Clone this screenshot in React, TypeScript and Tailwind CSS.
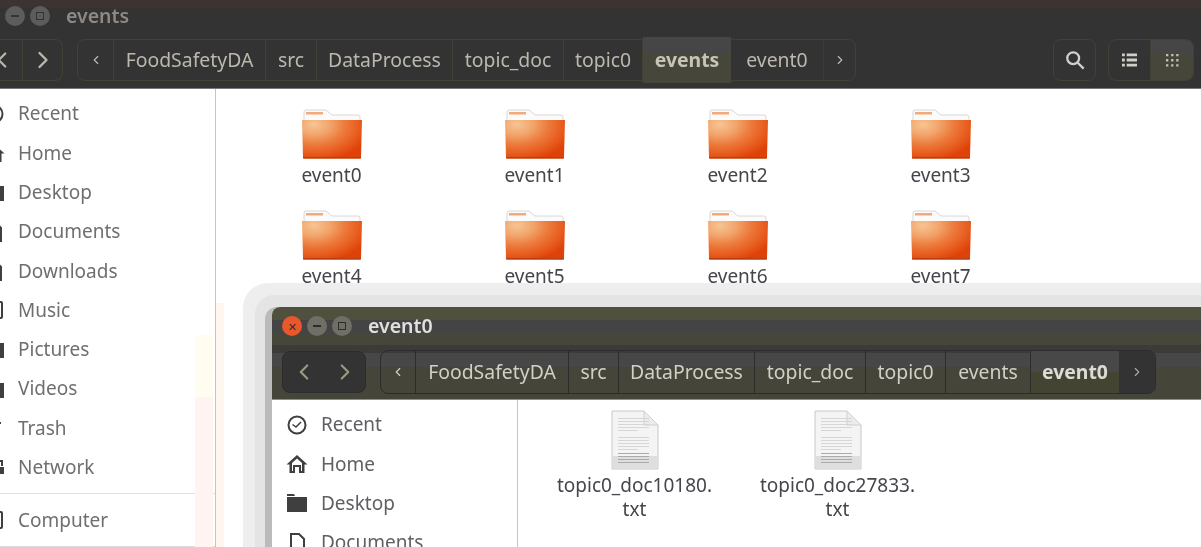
import { ChevronLeft, ChevronRight } from "lucide-react";

const font = "font-['Noto_Sans',sans-serif]";

const backPath = [
  { label: "FoodSafetyDA", w: "w-[152px]" },
  { label: "src", w: "w-[51px]" },
  { label: "DataProcess", w: "w-[136px]" },
  { label: "topic_doc", w: "w-[111px]" },
  { label: "topic0", w: "w-[79px]" },
];

const frontPath = [
  { label: "FoodSafetyDA", w: "w-[153px]" },
  { label: "src", w: "w-[50px]" },
  { label: "DataProcess", w: "w-[136px]" },
  { label: "topic_doc", w: "w-[111px]" },
  { label: "topic0", w: "w-[80px]" },
  { label: "events", w: "w-[85px]" },
];

const sideItems = ["Recent", "Home", "Desktop", "Documents", "Downloads", "Music", "Pictures", "Videos", "Trash", "Network"];
const events = ["event0", "event1", "event2", "event3", "event4", "event5", "event6", "event7"];

const FolderIcon = ({ id }: { id: string }) => (
  <svg width="62" height="50" viewBox="0 0 62 50">
    <defs>
      <radialGradient id={id} cx="0.2" cy="0.12" r="0.95">
        <stop offset="0" stopColor="#f7c592" />
        <stop offset="0.28" stopColor="#f2a56c" />
        <stop offset="0.55" stopColor="#ec7a3c" />
        <stop offset="0.8" stopColor="#e75c1e" />
        <stop offset="1" stopColor="#df4209" />
      </radialGradient>
    </defs>
    <path d="M3 20V3a2 2 0 0 1 2-2h20l6 5h26a2 2 0 0 1 2 2v12z" fill="#fbfbfb" stroke="#d8d8d8" />
    <rect x="5" y="3" width="17" height="2.5" fill="#f5a878" />
    <path d="M1 11h60l-1 37a1.500 1.500 0 0 1-1.500 1.500H3.500A1.500 1.500 0 0 1 2 48z" fill={`url(#${id})`} />
    <rect x="2" y="48" width="58" height="1.500" fill="#b8400f" />
  </svg>
);

const TextFileIcon = () => (
  <svg width="48" height="60" viewBox="0 0 48 60">
    <path d="M1 1h32l14 14v44H1z" fill="#f4f4f4" stroke="#c8c8c8" />
    <path d="M33 1v14h14z" fill="#ececec" stroke="#d0d0d0" />
    <rect x="1.500" y="46" width="45" height="12.500" fill="#dedede" />
    {[8, 11, 14, 17, 20, 27, 30, 33, 36, 39, 43, 46, 49, 52].map((y, i) => (
      <rect key={y} x="7" y={y} width={i % 5 === 4 ? 20 : 31} height="1" fill={y >= 43 ? "#ababab" : "#d6d6d6"} />
    ))}
  </svg>
);

const SideIcon = ({ name }: { name: string }) => {
  if (name === "Recent")
    return (
      <svg width="20" height="20" viewBox="0 0 20 20" fill="none" stroke="currentColor" strokeWidth="2">
        <circle cx="10" cy="10" r="8.5" />
        <path d="M5.5 9.500l3.500 2.500 5-5" strokeWidth="1.500" />
      </svg>
    );
  if (name === "Home")
    return (
      <svg width="22" height="20" viewBox="0 0 22 20" fill="currentColor">
        <path d="M11 1L0.5 10.500h3V19h5.500v-6h4v6h5.500v-8.500h3zM6 17v-8l5-4.500 5 4.500v8h-1v-6H7v6z" fillRule="evenodd" />
      </svg>
    );
  if (name === "Desktop" || name === "Pictures" || name === "Videos")
    return (
      <svg width="22" height="20" viewBox="0 0 22 20" fill="currentColor">
        <path d="M1 1h7l1 2H1zM1 4h20v15H1z" />
      </svg>
    );
  if (name === "Computer" || name === "Music")
    return (
      <svg width="20" height="20" viewBox="0 0 20 20" fill="none" stroke="currentColor" strokeWidth="2">
        <rect x="2" y="2" width="16" height="16" rx="1" />
      </svg>
    );
  if (name === "Trash")
    return (
      <svg width="18" height="20" viewBox="0 0 18 20" fill="none" stroke="currentColor" strokeWidth="2">
        <path d="M2 5h14M4 5l1 14h8l1-14M7 5V2h4v3" />
      </svg>
    );
  if (name === "Network")
    return (
      <svg width="22" height="20" viewBox="0 0 22 20" fill="currentColor">
        <path d="M1 2h9v7H1zM12 10h9v7h-9zM15 3h5v6h-2V5h-3z" />
      </svg>
    );
  return (
    <svg width="18" height="20" viewBox="0 0 18 20" fill="none" stroke="currentColor" strokeWidth="2">
      <path d="M3 1h8l5 5v13H3z" />
    </svg>
  );
};

const SideRow = ({ name, className }: { name: string; className: string }) => (
  <div className={`flex items-center ${className}`}>
    <span className="flex w-[48px] shrink-0 justify-center text-[#3f3f3f]">
      <SideIcon name={name} />
    </span>
    {name}
  </div>
);

const Dot = ({ close, children }: { close?: boolean; children: React.ReactNode }) => (
  <span
    className={`flex h-[20px] w-[20px] items-center justify-center rounded-full text-[#2c2c2c] ${close ? "bg-[#e9572b]" : "bg-[#6f6f68]"}`}
  >
    {children}
  </span>
);

const App = () => {
  return (
    <div className={`relative h-[547px] w-[1201px] overflow-hidden bg-white blur-[0.4px] ${font}`}>
      {/* back window */}
      <header className="h-[89px] border-b border-[#777] bg-[#333333]">
        <div className="h-[8px] bg-[#3d3331]" />
        <div className="flex h-[16px] items-center text-[#8f8985]">
          <div className="ml-[5px] flex gap-[5px]">
            <span className="flex h-[20px] w-[20px] items-center justify-center rounded-full bg-[#5c5c5c]">
              <span className="h-[2px] w-[8px] bg-[#333]" />
            </span>
            <span className="flex h-[20px] w-[20px] items-center justify-center rounded-full bg-[#5c5c5c]">
              <span className="h-[8px] w-[8px] border border-[#333]" />
            </span>
          </div>
          <span className="ml-[16px] text-[19.5px] font-semibold">events</span>
        </div>
        <div className="mt-[15px] flex h-[42px] items-center text-[#bcb8ae]">
          <div className="flex h-[42px] w-[63px] shrink-0 items-center rounded-r-lg border border-l-0 border-[#414135]">
            <div className="flex h-full w-[23px] shrink-0 items-center overflow-hidden border-r border-[#414135]">
              <ChevronLeft size={26} className="-ml-[11px] shrink-0" />
            </div>
            <div className="flex flex-1 justify-center">
              <ChevronRight size={28} />
            </div>
          </div>
          <nav className="ml-[14px] flex h-[42px] w-[779px] shrink-0 items-center rounded-lg border border-[#414135] text-[19.4px]">
            <span className="flex h-full w-[36px] items-center justify-center border-r border-[#414135]">
              <ChevronLeft size={14} />
            </span>
            {backPath.map((p) => (
              <span key={p.label} className={`flex h-full items-center justify-center border-r border-[#414135] ${p.w}`}>
                {p.label}
              </span>
            ))}
            <span className="flex h-[46px] w-[88px] items-center justify-center bg-[linear-gradient(#464646_0_38%,#46463a_38%)] font-bold text-[#c6c4b8]">
              events
            </span>
            <span className="flex h-full w-[93px] items-center justify-center border-r border-[#3c3c34]">event0</span>
            <span className="flex h-full flex-1 items-center justify-center">
              <ChevronRight size={14} />
            </span>
          </nav>
          <span className="ml-[197px] flex h-[42px] w-[43px] items-center justify-center rounded-lg border border-[#414135] text-[#d0d0d0]">
            <svg width="20" height="20" viewBox="0 0 22 22" fill="none" stroke="currentColor" strokeWidth="2.500">
              <circle cx="9" cy="9" r="6.5" />
              <path d="M14 14l6.500 6.500" />
            </svg>
          </span>
          <div className="ml-[12px] flex h-[42px] w-[86px] overflow-hidden rounded-lg border border-[#414135]">
            <span className="flex w-[42px] items-center justify-center border-r border-[#414135]">
              <svg width="15" height="14" viewBox="0 0 16 14" fill="#cfcfc8">
                <path d="M0 0h3v3H0zM5 0h11v3H5zM0 5.500h3v3H0zM5 5.500h11v3H5zM0 11h3v3H0zM5 11h11v3H5z" />
              </svg>
            </span>
            <span className="flex flex-1 items-center justify-center bg-[linear-gradient(#464646_0_35%,#46463a_35%)]">
              <svg width="13" height="13" viewBox="0 0 14 14" fill="#c0c0b8">
                <path d="M0 0h2.500v2.500H0zM5.500 0h2.500v2.500H5.500zM11 0h2.500v2.500H11zM0 5.500h2.500v2.500H0zM5.500 5.500h2.500v2.500H5.500zM11 5.500h2.500v2.500H11zM0 11h2.500v2.500H0zM5.500 11h2.500v2.500H5.500zM11 11h2.500v2.500H11z" />
              </svg>
            </span>
          </div>
        </div>
      </header>

      <div className="flex h-[458px]">
        <aside className="w-[216px] shrink-0 overflow-hidden border-r border-[#c4c4c4] pt-[5px] text-[19px] text-[#6f6f72]">
          {sideItems.map((s) => (
            <SideRow key={s} name={s} className="-ml-[30px] h-[39.3px]" />
          ))}
          <div className="mt-[6px] h-px bg-[#e8dcdc]" />
          <SideRow name="Computer" className="-ml-[30px] h-[52px]" />
          <div className="h-px bg-[#dcdcdc]" />
        </aside>
        <main className="grid flex-1 grid-cols-[repeat(4,203px)] auto-rows-[101px] pl-[14px] pt-[20px] text-[19px] text-[#44464c]">
          {events.map((e) => (
            <div key={e} className="flex flex-col items-center">
              <FolderIcon id={`grad-${e}`} />
              <span className="mt-[4px] leading-[24px]">{e}</span>
            </div>
          ))}
        </main>
      </div>

      {/* faint ghost of the window behind */}
      <div className="absolute left-[195px] top-[335px] h-[62px] w-[18px] bg-[#fffdf0]" />
      <div className="absolute left-[195px] top-[397px] h-[150px] w-[18px] bg-[#fff4f2]" />
      <div className="absolute left-[216px] top-[303px] h-[244px] w-[8px] bg-[#fff6f0]" />

      {/* front window */}
      <section className="absolute left-[272px] top-[307px] h-[300px] w-[960px] rounded-t-lg bg-white shadow-[-3px_4px_0_4px_#bbbbbb,-5px_0_0_12px_#e4e4e4,-5px_0_0_24px_#eeeeee]">
        <div className="h-[38px] rounded-t-lg bg-[linear-gradient(#50503f_0_13px,#444444_13px_26px,#46463a_26px)]">
          <div className="flex h-full items-center pl-[10px]">
            <div className="flex gap-[5px]">
              <Dot close>
                <span className="text-[11px] leading-none">✕</span>
              </Dot>
              <Dot>
                <span className="h-[2px] w-[8px] bg-[#2c2c2c]" />
              </Dot>
              <Dot>
                <span className="h-[8px] w-[8px] border border-[#2c2c2c]" />
              </Dot>
            </div>
            <span className="ml-[16px] text-[19.5px] font-semibold text-[#e0e0dc]">event0</span>
          </div>
        </div>
        <div className="flex h-[55px] items-center border-b border-[#8f8f80] bg-[linear-gradient(#3b3b38_0_8px,#474747_8px_22px,#45453a_22px)] pl-[10px] text-[#d0d0c8]">
          <div className="flex h-[42px] w-[84px] items-center justify-around rounded-lg border border-[#2c2c2a] bg-[#333] text-[#9a9a82]">
            <ChevronLeft size={26} />
            <ChevronRight size={26} />
          </div>
          <nav className="ml-[14px] flex h-[44px] w-[776px] shrink-0 items-center overflow-hidden rounded-lg border border-[#2c2c2a] text-[19.4px]">
            <span className="flex h-full w-[35px] items-center justify-center border-r border-[#2c2c2a]">
              <ChevronLeft size={14} />
            </span>
            {frontPath.map((p) => (
              <span key={p.label} className={`flex h-full items-center justify-center border-r border-[#2c2c2a] ${p.w}`}>
                {p.label}
              </span>
            ))}
            <span className="flex h-full w-[88px] items-center justify-center bg-[linear-gradient(#484848_0_50%,#444433_50%)] font-bold text-[#dcdcd4]">
              event0
            </span>
            <span className="flex h-full flex-1 items-center justify-center bg-[#333] text-[#a8a8a0]">
              <ChevronRight size={14} />
            </span>
          </nav>
        </div>
        <div className="flex">
          <aside className="h-[240px] w-[246px] shrink-0 border-r border-[#c4c4c4] pl-px pt-[5px] text-[19px] text-[#5f6064]">
            {sideItems.slice(0, 4).map((s) => (
              <SideRow key={s} name={s} className="h-[39.3px]" />
            ))}
          </aside>
          <main className="grid grid-cols-[repeat(2,203px)] pl-[15px] pt-[10px] text-[19px] text-[#44464c]">
            {["topic0_doc10180.", "topic0_doc27833."].map((f) => (
              <div key={f} className="flex flex-col items-center leading-[24px]">
                <TextFileIcon />
                <span className="mt-[3px]">{f}</span>
                <span>txt</span>
              </div>
            ))}
          </main>
        </div>
      </section>
    </div>
  );
};

export default App;
